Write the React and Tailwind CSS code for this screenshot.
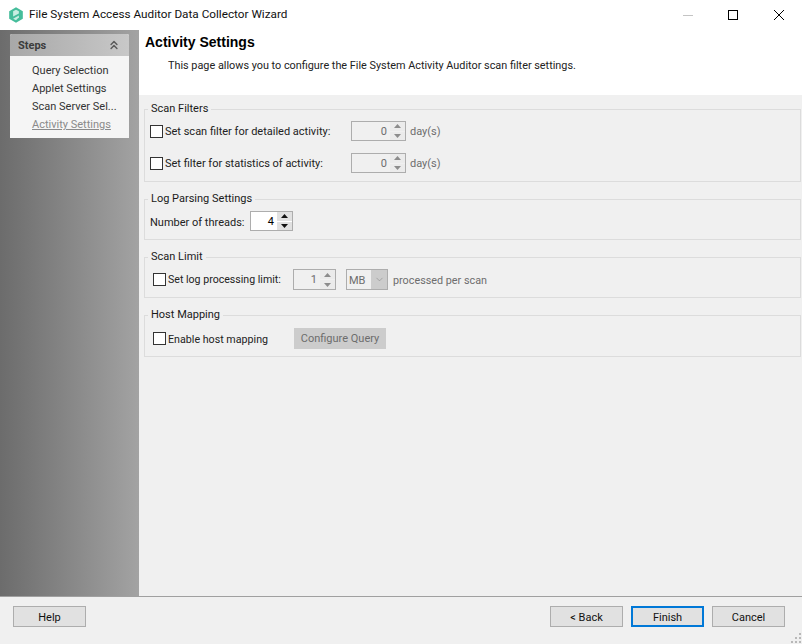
// App.jsx
import React from "react"
import { ChevronsUp, ChevronDown } from "lucide-react"

const steps = [
  { label: "Query Selection" },
  { label: "Applet Settings" },
  { label: "Scan Server Sel..." },
  { label: "Activity Settings", active: true },
]

const Logo = () => (
  <svg width="16" height="16" viewBox="0 0 15 15" className="shrink-0">
    <path d="M7.5 0.3 L13.9 3.9 V11.1 L7.5 14.7 L1.1 11.1 V3.9 Z" fill="#45bd9b" />
    <path d="M4.8 9 L10.2 6 V3.9 L7.5 2.5 L4.8 4 Z" fill="#c9eee2" />
    <path d="M4.8 11 L10.2 8 V9.6 L7.5 12.4 L4.8 11 Z" fill="#c9eee2" />
  </svg>
)

const Checkbox = () => (
  <span className="block w-[13px] h-[13px] border border-[#333333] bg-white shrink-0" />
)

const Arrow = ({ down, color }) => (
  <svg width="7" height="4" viewBox="0 0 7 4">
    <path d={down ? "M0 0 H7 L3.5 4 Z" : "M3.5 0 L7 4 H0 Z"} fill={color} />
  </svg>
)

const Spinner = ({ value, width, height = 20, enabled }) => (
  <div
    className={`flex border border-[#adadad] shrink-0 ${enabled ? "bg-white" : "bg-[#f0f0f0]"}`}
    style={{ width, height }}
  >
    <div className={`flex-1 text-right pr-[3px] leading-[20px] ${enabled ? "text-black" : "text-[#6d6d6d]"}`}>
      {value}
    </div>
    <div className="w-[15px] flex flex-col gap-px">
      <div className={`flex-1 flex items-center justify-center ${enabled ? "bg-[#e1e1e1]" : "bg-[#ebebeb]"}`}>
        <Arrow color={enabled ? "#111111" : "#8c8c8c"} />
      </div>
      <div className={`flex-1 flex items-center justify-center ${enabled ? "bg-[#e1e1e1]" : "bg-[#ebebeb]"}`}>
        <Arrow down color={enabled ? "#111111" : "#8c8c8c"} />
      </div>
    </div>
  </div>
)

const Group = ({ title, height, children }) => (
  <fieldset className="border border-[#dcdcdc] ml-[5px] mr-[1px]" style={{ height }}>
    <legend className="ml-[3px] px-[3px] h-[16px] leading-[15px] text-[#1a1a1a]">{title}</legend>
    {children}
  </fieldset>
)

const FooterButton = ({ children, focused }) => (
  <button
    className={`w-[73px] h-[21px] bg-[#e1e1e1] text-[#111111] leading-[17px] pt-[1px] ${focused ? "border-2 border-[#0078d7]" : "border border-[#adadad]"}`}
  >
    {children}
  </button>
)

export default function App() {
  return (
    <div className="w-[802px] h-[644px] flex flex-col bg-[#f0f0f0] text-[11px] whitespace-nowrap overflow-hidden font-['Roboto',sans-serif] relative">
      {/* title bar */}
      <div className="h-[30px] bg-white flex items-center shrink-0">
        <div className="ml-[8px] mr-[5px]"><Logo /></div>
        <span className="text-[11.75px] text-[#111111]">File System Access Auditor Data Collector Wizard</span>
        <div className="ml-auto flex items-center">
          <div className="w-[10px] h-px bg-[#c4c4c4] mr-[35px]" />
          <div className="w-[10px] h-[10px] border border-black mr-[36px]" />
          <svg width="10" height="10" viewBox="0 0 10 10" className="mr-[18px]">
            <path d="M0 0 L10 10 M10 0 L0 10" stroke="#000" strokeWidth="1" />
          </svg>
        </div>
      </div>

      <div className="flex-1 flex min-h-0">
        {/* steps sidebar */}
        <div className="w-[139px] shrink-0 bg-gradient-to-r from-[#6c6c6c] to-[#a3a3a3] pt-[4px] pl-[10px]">
          <div className="w-[119px] h-[104px] bg-[#f5f5f5] rounded-t-[2px]">
            <div className="h-[22px] rounded-t-[2px] bg-gradient-to-r from-[#a8a8a8] to-[#c8c8c8] flex items-center justify-between pl-[8px] pr-[8px]">
              <span className="font-bold text-[#3c3c3c] pt-[2px]">Steps</span>
              <ChevronsUp size={14} strokeWidth={2.5} color="#5a5a5a" />
            </div>
            <div className="pt-[6px] pl-[22px]">
              {steps.map((s) => (
                <div
                  key={s.label}
                  className={`h-[18px] leading-[18px] ${s.active ? "text-[#8a8a8a] underline" : "text-[#333333]"}`}
                >
                  {s.label}
                </div>
              ))}
            </div>
          </div>
        </div>

        {/* main */}
        <div className="flex-1 min-w-0">
          <div className="h-[65px] bg-white pl-[6px] pt-[2px]">
            <div className="font-['Liberation_Sans',sans-serif] font-bold text-[14px] leading-[20px] text-black">Activity Settings</div>
            <div className="pl-[23px] pt-[5px] leading-[18px] text-[10.85px] text-[#222222]">
              This page allows you to configure the File System Activity Auditor scan filter settings.
            </div>
          </div>

          <div className="pt-[6px] flex flex-col gap-[9px]">
            <Group title="Scan Filters" height={81}>
              <div className="flex flex-col gap-[12px] pt-[4px] pl-[5px]">
                <div className="flex items-center h-[20px]">
                  <Checkbox />
                  <span className="ml-[2px] w-[186px] pt-[2px] text-[#222222]">Set scan filter for detailed activity:</span>
                  <Spinner value="0" width={55} />
                  <span className="ml-[4px] pt-[2px] text-[#6d6d6d]">day(s)</span>
                </div>
                <div className="flex items-center h-[20px]">
                  <Checkbox />
                  <span className="ml-[2px] w-[186px] pt-[2px] text-[#222222]">Set filter for statistics of activity:</span>
                  <Spinner value="0" width={55} />
                  <span className="ml-[4px] pt-[2px] text-[#6d6d6d]">day(s)</span>
                </div>
              </div>
            </Group>

            <Group title="Log Parsing Settings" height={49}>
              <div className="flex items-center h-[20px] mt-[4px] pl-[5px]">
                <span className="w-[100px] pt-[4px] text-[#222222]">Number of threads:</span>
                <Spinner value="4" width={43} enabled />
              </div>
            </Group>

            <Group title="Scan Limit" height={49}>
              <div className="flex items-center h-[21px] mt-[4px] pl-[8px]">
                <Checkbox />
                <span className="ml-[2px] w-[125px] text-[10.6px] text-[#222222]">Set log processing limit:</span>
                <Spinner value="1" width={43} height={21} />
                <div className="ml-[10px] w-[42px] h-[21px] border border-[#adadad] flex">
                  <span className="flex-1 pl-[2px] leading-[21px] text-[#6d6d6d]">MB</span>
                  <div className="w-[16px] bg-[#cccccc] flex items-center justify-center">
                    <ChevronDown size={11} strokeWidth={1} color="#777777" />
                  </div>
                </div>
                <span className="ml-[5px] pt-[4px] text-[10.8px] text-[#6d6d6d]">processed per scan</span>
              </div>
            </Group>

            <Group title="Host Mapping" height={50}>
              <div className="flex items-center h-[21px] mt-[5px] pl-[8px]">
                <Checkbox />
                <span className="ml-[2px] w-[126px] pt-[3px] text-[10.7px] text-[#222222]">Enable host mapping</span>
                <div className="w-[92px] h-[21px] bg-[#cccccc] text-[#6d6d6d] text-center leading-[22px]">
                  Configure Query
                </div>
              </div>
            </Group>
          </div>
        </div>
      </div>

      {/* footer */}
      <div className="h-[48px] shrink-0 border-t border-[#a0a0a0] pt-[9px] pl-[13px] pr-[17px] flex items-start">
        <FooterButton>Help</FooterButton>
        <div className="ml-auto flex gap-[8px]">
          <FooterButton>&lt; Back</FooterButton>
          <FooterButton focused>Finish</FooterButton>
          <FooterButton>Cancel</FooterButton>
        </div>
      </div>

      {/* resize grip */}
      <svg width="12" height="12" viewBox="0 0 12 12" className="absolute right-0 bottom-0">
        <path d="M9 1h2v2H9zM5 5h2v2H5zM9 5h2v2H9zM1 9h2v2H1zM5 9h2v2H5zM9 9h2v2H9z" fill="#b8b8b8" />
      </svg>
    </div>
  )
}
